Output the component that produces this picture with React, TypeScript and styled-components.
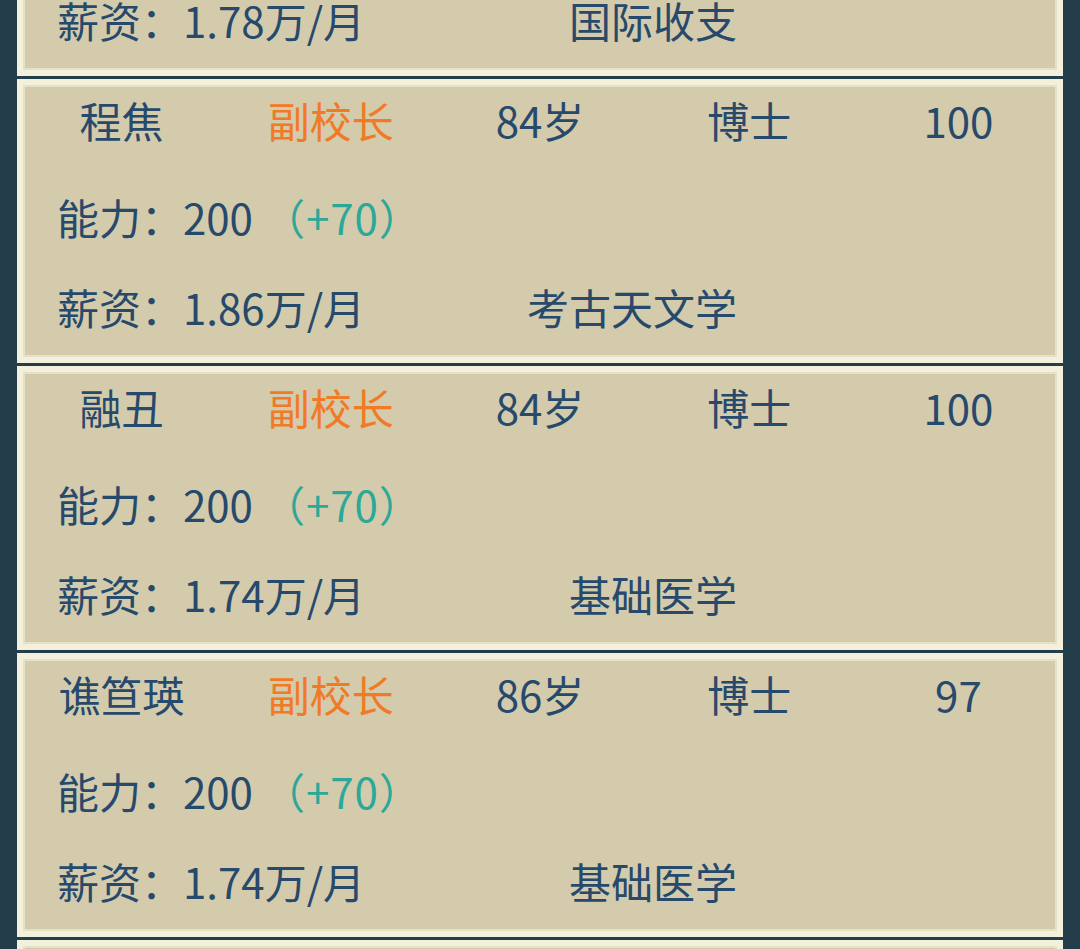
import React from "react";
import styled, { createGlobalStyle } from "styled-components";

const Global = createGlobalStyle`
  html, body { margin: 0; padding: 0; background: #233d4a; overflow: hidden; }
  body { font-family: "Noto Sans CJK SC", "Noto Sans", sans-serif; }
`;

const Page = styled.div`
  width: 1080px;
  height: 949px;
  overflow: hidden;
  background: #233d4a;
  box-sizing: border-box;
  padding: 0 17px 0 17px;
`;

const List = styled.div`
  display: flex;
  flex-direction: column;
  gap: 3px;
  margin-top: -208px;
`;

const Card = styled.div`
  position: relative;
  height: 284px;
  box-sizing: border-box;
  background: #d3cbab;
  box-shadow: inset 0 0 0 6px #f3f0dc, inset 0 0 0 8px #e6e0c6;
  color: #27496b;
  font-size: 42px;
  flex-shrink: 0;
`;

const TopRow = styled.div`
  display: grid;
  grid-template-columns: repeat(5, 1fr);
  height: 81px;
  align-items: center;
  line-height: 81px;
`;

const Cell = styled.div<{ $accent?: boolean }>`
  text-align: center;
  white-space: nowrap;
  color: ${(p) => (p.$accent ? "#f07a26" : "#27496b")};
`;

const InfoRow = styled.div<{ $gap: number }>`
  display: flex;
  align-items: center;
  height: 88px;
  line-height: 88px;
  margin-top: ${(p) => p.$gap}px;
  padding-left: 40px;
  white-space: nowrap;
`;

const Bonus = styled.span`
  color: #2ba898;
  margin-left: 10px;
  letter-spacing: 1px;
`;

const Salary = styled.span`
  width: 310px;
`;

const Major = styled.span`
  width: 370px;
  text-align: right;
`;

type Person = {
  name: string;
  title: string;
  age: number;
  degree: string;
  score: number;
  salary: string;
  major: string;
};

const people: Person[] = [
  { name: "某某", title: "副校长", age: 84, degree: "博士", score: 100, salary: "1.78", major: "国际收支" },
  { name: "程焦", title: "副校长", age: 84, degree: "博士", score: 100, salary: "1.86", major: "考古天文学" },
  { name: "融丑", title: "副校长", age: 84, degree: "博士", score: 100, salary: "1.74", major: "基础医学" },
  { name: "谯笪瑛", title: "副校长", age: 86, degree: "博士", score: 97, salary: "1.74", major: "基础医学" },
  { name: "某某", title: "副校长", age: 84, degree: "博士", score: 100, salary: "1.70", major: "基础医学" },
];

export default function App() {
  return (
    <Page>
      <Global />
      <List>
        {people.map((p, i) => (
          <Card key={i}>
            <TopRow>
              <Cell>{p.name}</Cell>
              <Cell $accent>{p.title}</Cell>
              <Cell>{p.age}岁</Cell>
              <Cell>{p.degree}</Cell>
              <Cell>{p.score}</Cell>
            </TopRow>
            <InfoRow $gap={13}>
              能力：200<Bonus>（+70）</Bonus>
            </InfoRow>
            <InfoRow $gap={2}>
              <Salary>薪资：{p.salary}万/月</Salary>
              <Major>{p.major}</Major>
            </InfoRow>
          </Card>
        ))}
      </List>
    </Page>
  );
}
